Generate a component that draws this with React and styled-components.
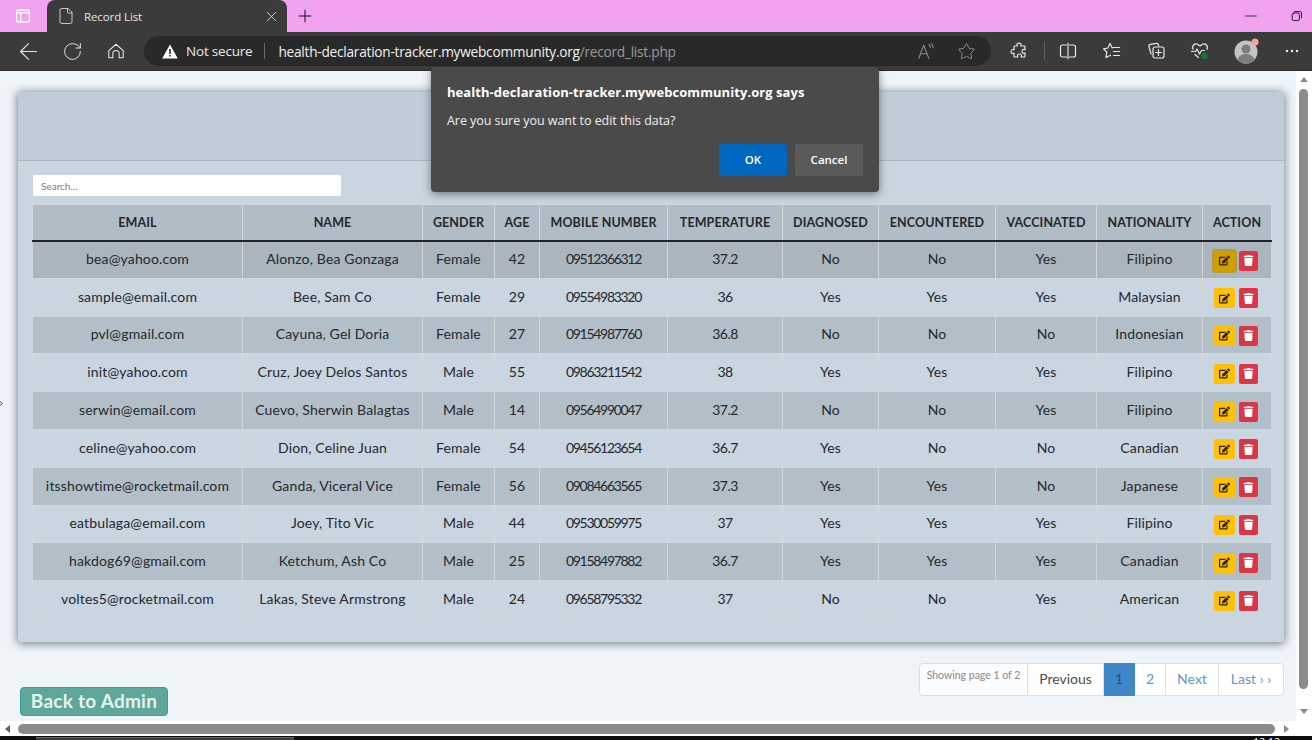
import React from 'react';
import styled, { createGlobalStyle } from 'styled-components';
import { ArrowLeft, RotateCw, File, X, Plus, Minus, Star } from 'lucide-react';
import { FaEdit, FaTrash } from 'react-icons/fa';

const GlobalStyle = createGlobalStyle`
  html, body {
    margin: 0;
    padding: 0;
    height: 100%;
    overflow: hidden;
    background: #000;
  }
  * {
    box-sizing: border-box;
  }
`;

const chromeFont = `'Open Sans', 'Noto Sans', sans-serif`;
const pageFont = `Lato, 'Open Sans', sans-serif`;

const Screen = styled.div`
  position: relative;
  width: 1312px;
  height: 740px;
  display: flex;
  flex-direction: column;
  overflow: hidden;
  font-family: ${pageFont};
`;

const TabBar = styled.div`
  height: 32px;
  flex: none;
  display: flex;
  background: #f2a3ef;
`;

const TabActions = styled.div`
  width: 47px;
  display: flex;
  align-items: center;
  justify-content: center;
  padding-right: 2px;
`;

const ActiveTab = styled.div`
  width: 240px;
  display: flex;
  align-items: center;
  padding: 0 7px 0 10px;
  background: #3b3b3b;
  border-radius: 8px 8px 0 0;
  color: #e6e6e6;
  font: 11.5px ${chromeFont};
  letter-spacing: -0.1px;
`;

const TabTitle = styled.span`
  flex: 1;
  margin-left: 9px;
`;

const NewTab = styled.div`
  width: 36px;
  display: flex;
  align-items: center;
  justify-content: center;
  color: #111;
`;

const WindowControls = styled.div`
  margin-left: auto;
  display: flex;
  align-items: center;
  color: #111;
  gap: 31px;
  padding-right: 9px;
`;

const Toolbar = styled.div`
  height: 39px;
  flex: none;
  display: flex;
  align-items: center;
  background: #3b3b3b;
  border-bottom: 1px solid #2c2c2c;
  padding-left: 6px;
`;

const ToolButton = styled.div`
  width: 44px;
  flex: none;
  display: flex;
  align-items: center;
  justify-content: center;
  margin-left: ${props => props.$gap || 0}px;
  color: #e8e8e8;
`;

const ToolDivider = styled.div`
  width: 1px;
  height: 18px;
  flex: none;
  margin-left: 3px;
  margin-right: 1px;
  background: #5f5f5f;
`;

const AddressBar = styled.div`
  width: 847px;
  height: 30px;
  flex: none;
  margin-left: 6px;
  display: flex;
  align-items: center;
  padding-left: 18px;
  background: #292929;
  border-radius: 15px;
  font: 13.7px ${chromeFont};
  color: #e9e9e9;
`;

const NotSecure = styled.span`
  margin-left: 8px;
  font-size: 13.5px;
  letter-spacing: -0.2px;
`;

const AddressDivider = styled.span`
  width: 1px;
  height: 16px;
  margin: 0 13px 0 12px;
  background: #6a6a6a;
`;

const UrlHost = styled.span`
  letter-spacing: -0.26px;
  color: #f2f2f2;
`;

const UrlPath = styled(UrlHost)`
  color: #9a9a9a;
`;

const AddressTools = styled.div`
  margin-left: auto;
  display: flex;
  align-items: center;
  gap: 22px;
  padding-right: 15px;
  color: #8d8d8d;
`;

const Viewport = styled.div`
  height: 650px;
  flex: none;
  display: flex;
`;

const Page = styled.div`
  width: 1296px;
  flex: none;
  padding: 21px 12px 0 18px;
  background: #eff4f9;
`;

const Card = styled.section`
  background: #c9d5e0;
  border-radius: 3px;
  box-shadow: 0 1px 9px 1px rgba(60, 70, 80, 0.65);
`;

const CardHeader = styled.div`
  height: 69px;
  background: #c0cdd8;
  border-bottom: 1px solid #a9b5bf;
  border-radius: 3px 3px 0 0;
`;

const CardBody = styled.div`
  padding: 14px 13px 23px 14px;
`;

const Search = styled.input`
  display: block;
  width: 308px;
  height: 21px;
  margin: 0 0 8px 1px;
  padding: 0 8px;
  border: none;
  border-radius: 2px;
  background: #fff;
  font: 10px ${pageFont};
  &::placeholder {
    color: #7d7d7d;
  }
`;

const Table = styled.table`
  width: 1239px;
  table-layout: fixed;
  border-collapse: collapse;
  color: #25282c;
`;

const HeadCell = styled.th`
  height: 36px;
  padding: 0;
  background: #b1bdc6;
  border: 1px solid #d3d7da;
  border-bottom: 2px solid #212529;
  font-size: 12.5px;
  font-weight: 700;
  letter-spacing: 0.1px;
  text-align: center;
`;

const Row = styled.tr`
  height: 37.8px;
  background: ${props => (props.$hovered ? '#aab5bd' : props.$striped ? '#b3bfc8' : '#c9d5e0')};
`;

const Cell = styled.td`
  padding: 0 0 2px;
  border: 1px solid #d3d7da;
  font-size: 14px;
  letter-spacing: ${props => props.$spacing ?? 0.16}px;
  text-align: center;
  vertical-align: middle;
`;

const ActionGroup = styled.div`
  display: flex;
  justify-content: center;
  gap: 4px;
  padding: 4px 2px 0 0;
`;

const ActionButton = styled.span`
  width: ${props => (props.$danger ? 19 : 21)}px;
  height: 20px;
  display: flex;
  align-items: center;
  justify-content: center;
  border-radius: 2px;
  font-size: 11px;
  color: ${props => (props.$danger ? '#fff' : '#2b2410')};
  background: ${props => (props.$danger ? '#dc3545' : props.$focused ? '#d19f00' : '#ffc107')};
  box-shadow: ${props => (props.$focused ? '0 0 0 2px #b99a37' : 'none')};
`;

const Footer = styled.div`
  display: flex;
  justify-content: space-between;
  height: 53px;
  margin-top: 21px;
`;

const BackLink = styled.a`
  align-self: flex-end;
  width: 148px;
  height: 29px;
  margin-left: 2px;
  padding-bottom: 2px;
  display: flex;
  align-items: center;
  justify-content: center;
  background: #5da89b;
  border: 1px solid #3a9ca6;
  border-radius: 4px;
  color: #e6f3ea;
  font-size: 19px;
  font-weight: 700;
  letter-spacing: 0.25px;
`;

const Pager = styled.nav`
  display: flex;
  height: 33px;
  border-radius: 4px;
  font-size: 14px;
`;

const PagerInfo = styled.span`
  width: 109px;
  padding-top: 5px;
  text-align: center;
  font-size: 10.5px;
  color: #8a8a8a;
  background: #fbfcfe;
  border: 1px solid #dcdfe2;
  border-radius: 4px 0 0 4px;
`;

const PagerLink = styled.a`
  width: ${props => props.$width}px;
  padding-bottom: 2px;
  display: flex;
  align-items: center;
  justify-content: center;
  background: ${props => (props.$active ? '#3f88c8' : '#fff')};
  color: ${props => (props.$active ? '#24506f' : props.$plain ? '#4e4e4e' : '#5f97d2')};
  border: 1px solid ${props => (props.$active ? '#3f88c8' : '#dfe2e5')};
  border-left: none;
  border-radius: ${props => (props.$last ? '0 4px 4px 0' : '0')};
`;

const VerticalBar = styled.div`
  width: 16px;
  flex: none;
  display: flex;
  flex-direction: column;
  align-items: center;
  background: #fff;
  padding: 6px 1px 0 0;
`;

const Thumb = styled.div`
  background: #8b8b8b;
  border-radius: 5px;
`;

const VerticalThumb = styled(Thumb)`
  width: 9px;
  height: 600px;
  margin: 7px 0 20px;
`;

const HorizontalBar = styled.div`
  height: 15px;
  flex: none;
  display: flex;
  align-items: center;
  background: #fff;
  padding-left: 5px;
`;

const HorizontalThumb = styled(Thumb)`
  width: 1257px;
  height: 10px;
  margin: 0 9px 0 8px;
`;

const Arrow = styled.span`
  width: 0;
  height: 0;
  border-style: solid;
  border-color: transparent;
  ${props => props.$dir === 'up' && 'border-width: 0 4.5px 5px; border-bottom-color: #8b8b8b;'}
  ${props => props.$dir === 'down' && 'border-width: 5px 4.5px 0; border-top-color: #8b8b8b;'}
  ${props => props.$dir === 'left' && 'border-width: 4px 5px 4px 0; border-right-color: #5f5f5f;'}
  ${props => props.$dir === 'right' && 'border-width: 4px 0 4px 5px; border-left-color: #8b8b8b;'}
`;

const Taskbar = styled.div`
  flex: 1;
  display: flex;
  justify-content: space-between;
  padding: 1px 32px 0 36px;
  background: #0c0c0c;
  overflow: hidden;
`;

const TaskItem = styled.div`
  width: 258px;
  height: 3px;
  background: #3b3b3b;
  border-top: 1px solid #6a6a6a;
`;

const TaskClock = styled.span`
  color: #fff;
  font: 10.5px/11px ${chromeFont};
`;

const CursorMark = styled.svg`
  position: absolute;
  left: 0;
  top: 401px;
`;

const Dialog = styled.div`
  position: absolute;
  left: 431px;
  top: 67px;
  width: 448px;
  height: 125px;
  padding: 16px;
  background: #4a4a4a;
  border-radius: 4px;
  box-shadow: 0 2px 8px rgba(0, 0, 0, 0.45);
  color: #fff;
  font-family: ${chromeFont};
`;

const DialogTitle = styled.div`
  font-size: 13px;
  font-weight: 700;
  line-height: 18px;
  letter-spacing: 0.06px;
`;

const DialogMessage = styled.div`
  margin-top: 11px;
  font-size: 12.5px;
  line-height: 18px;
  letter-spacing: -0.05px;
  color: #f0f0f0;
`;

const DialogActions = styled.div`
  display: flex;
  justify-content: flex-end;
  gap: 8px;
  margin-top: 14px;
`;

const DialogButton = styled.button`
  width: 68px;
  height: 32px;
  padding: 0 0 2px;
  border: none;
  border-radius: 2px;
  background: ${props => (props.$primary ? '#0067c0' : '#5a5a5a')};
  color: #fff;
  font: 600 11.5px ${chromeFont};
`;

const headers = ['EMAIL', 'NAME', 'GENDER', 'AGE', 'MOBILE NUMBER', 'TEMPERATURE', 'DIAGNOSED', 'ENCOUNTERED', 'VACCINATED', 'NATIONALITY', 'ACTION'];
const colWidths = [210, 180, 72, 45, 128, 115, 96, 117, 101, 106, 69];
// Lato digits run wider than the original font
const colSpacing = { 4: -1.3, 5: -0.5 };

const records = [
  ['bea@yahoo.com', 'Alonzo, Bea Gonzaga', 'Female', '42', '09512366312', '37.2', 'No', 'No', 'Yes', 'Filipino'],
  ['sample@email.com', 'Bee, Sam Co', 'Female', '29', '09554983320', '36', 'Yes', 'Yes', 'Yes', 'Malaysian'],
  ['pvl@gmail.com', 'Cayuna, Gel Doria', 'Female', '27', '09154987760', '36.8', 'No', 'No', 'No', 'Indonesian'],
  ['init@yahoo.com', 'Cruz, Joey Delos Santos', 'Male', '55', '09863211542', '38', 'Yes', 'Yes', 'Yes', 'Filipino'],
  ['serwin@email.com', 'Cuevo, Sherwin Balagtas', 'Male', '14', '09564990047', '37.2', 'No', 'No', 'Yes', 'Filipino'],
  ['celine@yahoo.com', 'Dion, Celine Juan', 'Female', '54', '09456123654', '36.7', 'Yes', 'No', 'No', 'Canadian'],
  ['itsshowtime@rocketmail.com', 'Ganda, Viceral Vice', 'Female', '56', '09084663565', '37.3', 'Yes', 'Yes', 'No', 'Japanese'],
  ['eatbulaga@email.com', 'Joey, Tito Vic', 'Male', '44', '09530059975', '37', 'Yes', 'Yes', 'Yes', 'Filipino'],
  ['hakdog69@gmail.com', 'Ketchum, Ash Co', 'Male', '25', '09158497882', '36.7', 'Yes', 'Yes', 'Yes', 'Canadian'],
  ['voltes5@rocketmail.com', 'Lakas, Steve Armstrong', 'Male', '24', '09658795332', '37', 'No', 'No', 'Yes', 'American'],
];

const Outline = ({ size = 20, width = 1.2, children }) => (
  <svg width={size} height={size} viewBox="0 0 20 20" fill="none" stroke="currentColor" strokeWidth={width} strokeLinecap="round" strokeLinejoin="round">
    {children}
  </svg>
);

const Browser = () => (
  <>
    <TabBar>
      <TabActions>
        <Outline size={16} width={1.6}>
          <rect x="2" y="2.5" width="16" height="15" rx="2.5" stroke="#fff" />
          <path d="M2.500 6h15M7 6v11" stroke="#fff" />
        </Outline>
      </TabActions>
      <ActiveTab>
        <File size={18} strokeWidth={1.1} />
        <TabTitle>Record List</TabTitle>
        <X size={17} strokeWidth={1.2} />
      </ActiveTab>
      <NewTab>
        <Plus size={20} strokeWidth={1.2} />
      </NewTab>
      <WindowControls>
        <Minus size={18} strokeWidth={1.1} />
        <Outline size={12} width={1.5}>
          <rect x="2" y="5" width="12" height="12.5" rx="2.5" />
          <path d="M6 2.500h8.500a3 3 0 0 1 3 3V13" />
        </Outline>
      </WindowControls>
    </TabBar>
    <Toolbar>
      <ToolButton><ArrowLeft size={27} strokeWidth={1} /></ToolButton>
      <ToolButton><RotateCw size={21} strokeWidth={1.1} /></ToolButton>
      <ToolButton>
        <Outline size={18}>
          <path d="M2 9.500 10 2.500l8 7V17.500h-4.500V13a3.500 3.500 0 0 0-7 0v4.500H2Z" />
        </Outline>
      </ToolButton>
      <AddressBar>
        <svg width="16" height="15" viewBox="0 0 16 15">
          <path d="M8 .6 15.800 14.400H.2Z" fill="#fff" />
          <path d="M7.200 5h1.600v5H7.200zM7.200 11h1.600v1.600H7.200z" fill="#292929" />
        </svg>
        <NotSecure>Not secure</NotSecure>
        <AddressDivider />
        <UrlHost>health-declaration-tracker.mywebcommunity.org</UrlHost>
        <UrlPath>/record_list.php</UrlPath>
        <AddressTools>
          <Outline size={18} width={1.2}>
            <path d="M2 18 7.500 3.500 13 18M4 13h7M13 3c1.200.7 1.900 1.800 2 3M15.500 1.500c1.500 1 2.400 2.500 2.500 4.500" />
          </Outline>
          <Star size={19} strokeWidth={1.2} />
        </AddressTools>
      </AddressBar>
      <ToolButton $gap={6}>
        <Outline>
          <path d="M8 3.600c0-2 4-2 4 0 0 .6-.2 1-.3 1.400h3.600c.4 0 .7.3.7.7v3c-.5-.2-.9-.4-1.500-.4-2 0-2 4 0 4 .6 0 1-.2 1.500-.4v3.400c0 .4-.3.7-.7.7h-3.100c.1-.5.3-.9.3-1.500 0-2-4-2-4 0 0 .6.2 1 .3 1.500H5.700c-.4 0-.7-.3-.7-.7v-3.100c-.5.1-.9.3-1.500.3-2 0-2-4 0-4 .6 0 1 .2 1.500.3V5.700c0-.4.3-.7.7-.7h2.600C8.200 4.600 8 4.200 8 3.600Z" />
        </Outline>
      </ToolButton>
      <ToolDivider />
      <ToolButton>
        <Outline>
          <rect x="2.500" y="4" width="15" height="12" rx="2" />
          <path d="M10 2.500v15" strokeWidth="2" stroke="#9d9d9d" />
        </Outline>
      </ToolButton>
      <ToolButton>
        <Outline>
          <path d="M10.300 7 8 2.500 5.900 7l-4.400.8L4.800 11 4 16.500l4.500-2.300" />
          <path d="M11 6.500h6.500M11.500 10.500h6M11.500 14.500h6" />
        </Outline>
      </ToolButton>
      <ToolButton>
        <Outline>
          <path d="M5 13 3 5.500c-.3-1 .3-2 1.300-2.200l6-1c1-.1 1.800.4 2.100 1.300l.4 1.400" />
          <rect x="7" y="6" width="11" height="11" rx="2" />
          <path d="M12.500 8.500v6M9.500 11.500h6" />
        </Outline>
      </ToolButton>
      <ToolButton>
        <svg width="20" height="20" viewBox="0 0 20 20" fill="none" stroke="currentColor" strokeWidth="1.2" strokeLinecap="round" strokeLinejoin="round">
          <path d="M3 8.500C1.500 5 4.500 1.800 7.500 3.200L10 5l2.500-1.800c3-1.400 6 1.800 4.500 5.300" />
          <path d="M1.500 10.500h4l1.500-2.500 2.500 5 2-3.500h3" />
          <path d="M5 13.500l3.500 3" />
          <circle cx="14.500" cy="15" r="3.200" fill="#117a2c" stroke="none" />
        </svg>
      </ToolButton>
      <ToolButton $gap={2}>
        <svg width="26" height="26" viewBox="0 0 26 26">
          <circle cx="13" cy="14" r="11.500" fill="#c4c4c4" />
          <circle cx="13" cy="11" r="4.500" fill="#7d7d7d" />
          <path d="M4.500 21.500c1.500-4 4.500-5.500 8.500-5.500s7 1.500 8.500 5.500c-2 2.500-5 4-8.500 4s-6.500-1.500-8.500-4Z" fill="#7d7d7d" />
          <circle cx="22" cy="4" r="3.500" fill="#f5a3a3" />
        </svg>
      </ToolButton>
      <ToolButton $gap={2}>
        <svg width="14" height="4" viewBox="0 0 14 4" fill="#eee">
          <circle cx="2" cy="2" r="1.200" /><circle cx="7" cy="2" r="1.200" /><circle cx="12" cy="2" r="1.200" />
        </svg>
      </ToolButton>
    </Toolbar>
  </>
);

const RecordTable = () => (
  <Table>
    <colgroup>
      {colWidths.map((w, i) => <col key={i} width={w} />)}
    </colgroup>
    <thead>
      <tr>
        {headers.map(h => <HeadCell key={h}>{h}</HeadCell>)}
      </tr>
    </thead>
    <tbody>
      {records.map((record, i) => (
        <Row key={record[0]} $striped={i % 2 === 0} $hovered={i === 0}>
          {record.map((value, j) => <Cell key={j} $spacing={colSpacing[j]}>{value}</Cell>)}
          <Cell>
            <ActionGroup>
              <ActionButton $focused={i === 0}><FaEdit /></ActionButton>
              <ActionButton $danger><FaTrash /></ActionButton>
            </ActionGroup>
          </Cell>
        </Row>
      ))}
    </tbody>
  </Table>
);

const App = () => (
  <Screen>
    <GlobalStyle />
    <Browser />
    <Viewport>
      <Page>
        <Card>
          <CardHeader />
          <CardBody>
            <Search placeholder="Search..." />
            <RecordTable />
          </CardBody>
        </Card>
        <Footer>
          <BackLink>Back to Admin</BackLink>
          <Pager>
            <PagerInfo>Showing page 1 of 2</PagerInfo>
            <PagerLink $width={76} $plain>Previous</PagerLink>
            <PagerLink $width={31} $active>1</PagerLink>
            <PagerLink $width={31}>2</PagerLink>
            <PagerLink $width={53}>Next</PagerLink>
            <PagerLink $width={65} $last>Last › ›</PagerLink>
          </Pager>
        </Footer>
      </Page>
      <VerticalBar>
        <Arrow $dir="up" />
        <VerticalThumb />
        <Arrow $dir="down" />
      </VerticalBar>
    </Viewport>
    <HorizontalBar>
      <Arrow $dir="left" />
      <HorizontalThumb />
      <Arrow $dir="right" />
    </HorizontalBar>
    <Taskbar>
      <TaskItem />
      <TaskClock>12:12</TaskClock>
    </Taskbar>
    <CursorMark width="3" height="5" viewBox="0 0 3 5">
      <path d="M0 .5 2.500 2.500 0 4.500" fill="none" stroke="#3f5270" strokeWidth="1" />
    </CursorMark>
    <Dialog>
      <DialogTitle>health-declaration-tracker.mywebcommunity.org says</DialogTitle>
      <DialogMessage>Are you sure you want to edit this data?</DialogMessage>
      <DialogActions>
        <DialogButton $primary>OK</DialogButton>
        <DialogButton>Cancel</DialogButton>
      </DialogActions>
    </Dialog>
  </Screen>
);

export default App;
